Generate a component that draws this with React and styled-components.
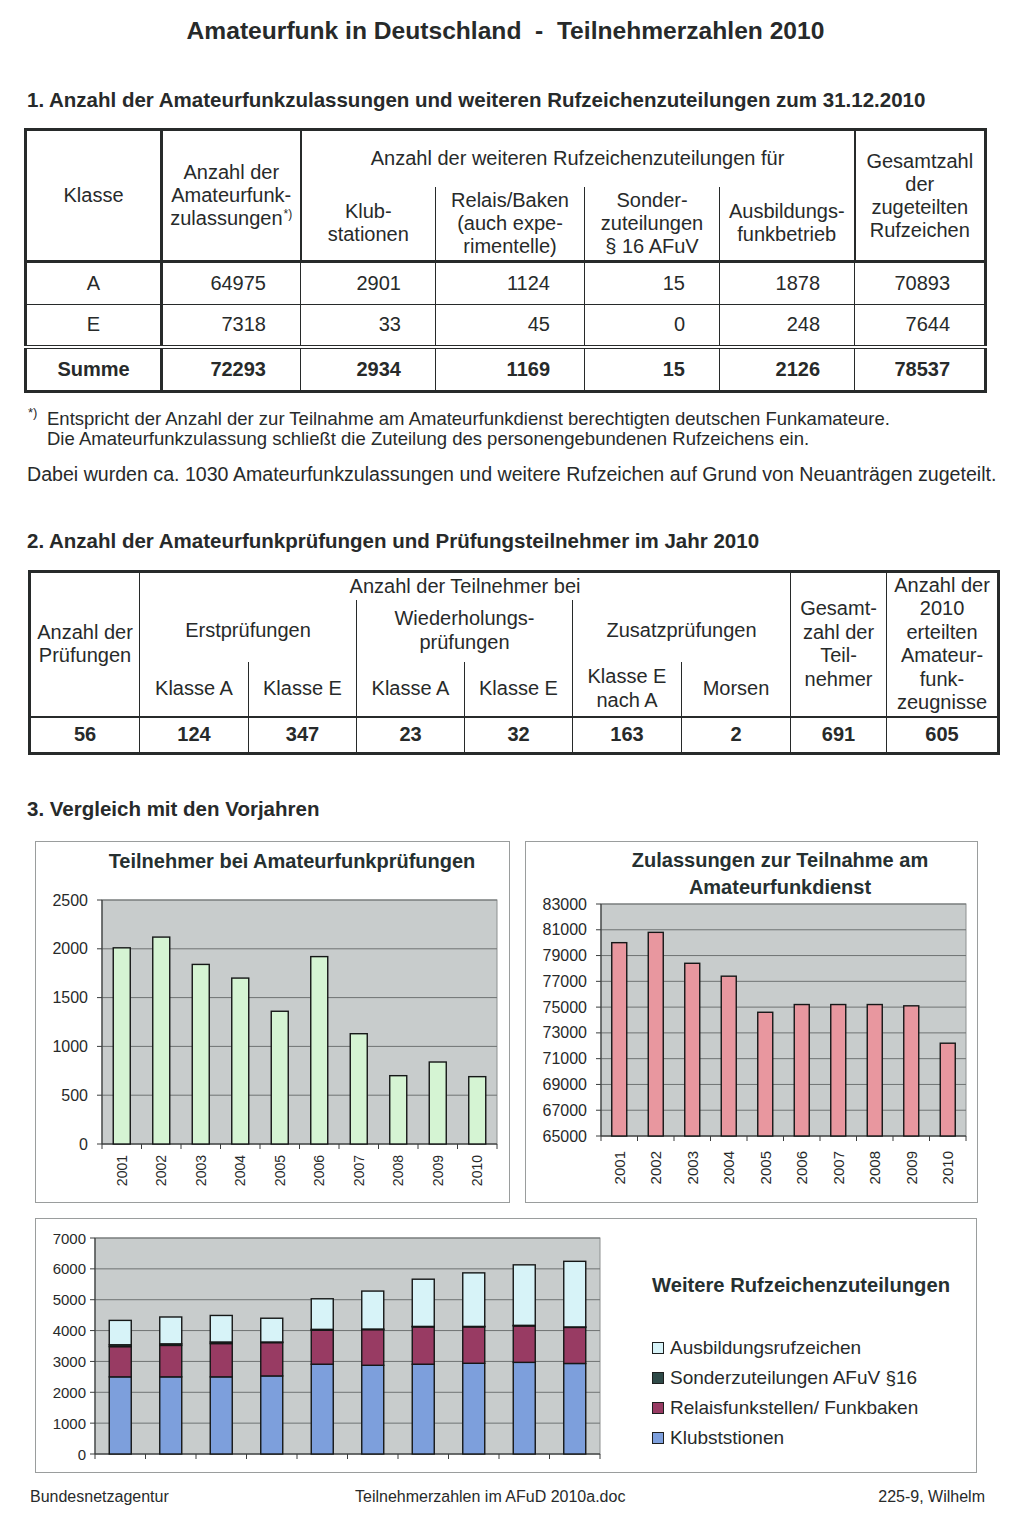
import React from 'react';
import styled, { createGlobalStyle } from 'styled-components';

const INK = '#272a2a';
const PLOT_BG = '#c8cccc';
const GRID = '#6f7373';

const GlobalStyle = createGlobalStyle`
  html, body { margin: 0; padding: 0; background: #fff; }
  body { font-family: "Liberation Sans", Arial, Helvetica, sans-serif; color: ${INK}; }
`;

const Page = styled.main`
  width: 1024px;
  height: 1516px;
  overflow: hidden;
  display: flex;
  flex-direction: column;
  align-items: flex-start;
`;

const DocTitle = styled.h1`
  align-self: stretch;
  margin: 17px 0 0;
  padding-right: 13px;
  font-size: 24.6px;
  line-height: 28px;
  font-weight: 700;
  text-align: center;
  white-space: pre;
`;

const SectionHeading = styled.h2`
  margin: ${p => p.$mt}px 0 0 27px;
  font-size: 20.5px;
  line-height: 24px;
  font-weight: 700;
`;

const DataTable = styled.table`
  margin: ${p => p.$mt}px 0 0 ${p => p.$ml}px;
  width: ${p => p.$w}px;
  border-collapse: collapse;
  table-layout: fixed;
  border: 3px solid ${INK};
  font-size: 20px;
  line-height: ${p => p.$lh}px;
`;

const Col = styled.col`
  width: ${p => p.$w}px;
`;

const Row = styled.tr`
  height: ${p => p.$h}px;
`;

const Cell = styled.td`
  border: 1px solid ${INK};
  padding: 0 ${p => p.$pr ?? 2}px 0 2px;
  text-align: ${p => p.$align || 'center'};
  vertical-align: middle;
  font-weight: ${p => (p.$bold ? 700 : 400)};
  white-space: nowrap;
  ${p => p.$br && `border-right: ${p.$br};`}
  ${p => p.$bl && `border-left: ${p.$bl};`}
  ${p => p.$bt && `border-top: ${p.$bt};`}
  ${p => (p.$open === 'bottom' || p.$open === 'both') && 'border-bottom: none;'}
  ${p => (p.$open === 'top' || p.$open === 'both') && 'border-top: none;'}
`;

const Sup = styled.sup`
  font-size: 12px;
  line-height: 0;
  vertical-align: 7px;
  margin-left: 1px;
`;

const Footnote = styled.div`
  display: flex;
  margin: 16px 0 0 28px;
  font-size: 18.5px;
  line-height: 20px;
`;

const FootMark = styled.span`
  width: 19px;
  flex: none;
  font-size: 13px;
  line-height: 13px;
  margin-top: -3px;
`;

const Note = styled.p`
  margin: 13px 0 0 27px;
  font-size: 19.6px;
  line-height: 24px;
`;

const ChartRow = styled.div`
  display: flex;
  gap: 15px;
  margin: 20px 0 0 35px;
`;

const ChartCard = styled.section`
  box-sizing: border-box;
  width: ${p => p.$w}px;
  height: ${p => p.$h}px;
  border: 1px solid #9a9d9d;
  display: flex;
  flex-direction: ${p => (p.$row ? 'row' : 'column')};
  margin: ${p => p.$mt || 0}px 0 0 ${p => p.$ml || 0}px;
`;

const ChartTitle = styled.h3`
  margin: 0;
  padding: ${p => p.$pt}px 0 0 ${p => p.$pl}px;
  font-size: 20px;
  line-height: ${p => p.$lh}px;
  font-weight: 700;
  text-align: center;
  color: #263030;
`;

const PlotSvg = styled.svg`
  display: block;
  flex: none;
  overflow: visible;
`;

const Legend = styled.div`
  display: flex;
  flex-direction: column;
  padding: 54px 0 0 16px;
`;

const LegendTitle = styled.h4`
  margin: 0 0 36px;
  font-size: 20.2px;
  line-height: 24px;
  font-weight: 700;
  color: #263030;
`;

const LegendItem = styled.div`
  display: flex;
  align-items: center;
  gap: 6px;
  font-size: 19px;
  line-height: 30px;
`;

const Swatch = styled.span`
  width: 10px;
  height: 10px;
  border: 1px solid #1d1f1f;
  background: ${p => p.$c};
`;

const Footer = styled.footer`
  align-self: stretch;
  display: grid;
  grid-template-columns: 325px 1fr auto;
  margin: 14px 39px 0 30px;
  font-size: 16px;
  line-height: 20px;
`;

function BarPlot({
  width, height, x0, x1, y0, y1, min, max, step, bars, barW,
  labelX, labelSize, years, yearY, yearSize,
}) {
  const n = bars.length;
  const cw = (x1 - x0) / n;
  const sy = v => y1 - ((v - min) / (max - min)) * (y1 - y0);
  const ticks = [];
  for (let v = min; v <= max; v += step) ticks.push(v);
  return (
    <PlotSvg width={width} height={height}>
      <rect x={x0} y={y0} width={x1 - x0} height={y1 - y0} fill={PLOT_BG} stroke="#8d9090" strokeWidth={1} />
      {ticks.map(v => (
        <line key={'g' + v} x1={x0} x2={x1} y1={sy(v)} y2={sy(v)} stroke={GRID} strokeWidth={1} />
      ))}
      {ticks.map(v => (
        <line key={'t' + v} x1={x0 - 5} x2={x0} y1={sy(v)} y2={sy(v)} stroke="#3a3d3d" strokeWidth={1} />
      ))}
      {ticks.map(v => (
        <text key={'l' + v} x={labelX} y={sy(v)} textAnchor="end" dominantBaseline="central" fontSize={labelSize} fill={INK}>
          {v}
        </text>
      ))}
      <line x1={x0} y1={y0} x2={x0} y2={y1} stroke="#3a3d3d" strokeWidth={1.2} />
      <line x1={x0} y1={y1} x2={x1} y2={y1} stroke="#3a3d3d" strokeWidth={1.2} />
      {Array.from({ length: n + 1 }, (_, i) => (
        <line key={'x' + i} x1={x0 + i * cw} x2={x0 + i * cw} y1={y1} y2={y1 + 5} stroke="#3a3d3d" strokeWidth={1} />
      ))}
      {bars.map((segs, i) => {
        const cx = x0 + (i + 0.5) * cw;
        let prev = min;
        return (
          <g key={'b' + i}>
            {segs.map(([top, color], j) => {
              const r = (
                <rect key={j} x={cx - barW / 2} y={sy(top)} width={barW} height={sy(prev) - sy(top)}
                  fill={color} stroke="#151717" strokeWidth={1.4} />
              );
              prev = top;
              return r;
            })}
          </g>
        );
      })}
      {years && years.map((y, i) => {
        const cx = x0 + (i + 0.5) * cw;
        return (
          <text key={'y' + y} x={cx} y={yearY} transform={`rotate(-90 ${cx} ${yearY})`} textAnchor="end"
            dominantBaseline="central" fontSize={yearSize} fill={INK}>
            {y}
          </text>
        );
      })}
    </PlotSvg>
  );
}

const YEARS = [2001, 2002, 2003, 2004, 2005, 2006, 2007, 2008, 2009, 2010];
const GREEN = '#d5f4d3';
const PINK = '#e8979f';
const C_KLUB = '#7d9fdc';
const C_REL = '#983b63';
const C_SON = '#2f4a48';
const C_AUS = '#d7f3f8';

const prufData = [2010, 2120, 1840, 1700, 1360, 1920, 1130, 700, 840, 690].map(v => [[v, GREEN]]);
const zulData = [80000, 80800, 78400, 77400, 74600, 75200, 75200, 75200, 75100, 72200].map(v => [[v, PINK]]);
const stackData = [
  [2500, 3480, 3540, 4330],
  [2500, 3520, 3570, 4440],
  [2500, 3580, 3630, 4490],
  [2530, 3610, 3630, 4400],
  [2910, 4010, 4040, 5030],
  [2875, 4030, 4050, 5280],
  [2910, 4120, 4135, 5665],
  [2940, 4120, 4135, 5870],
  [2970, 4150, 4170, 6130],
  [2934, 4103, 4118, 6244],
].map(([a, b, c, d]) => [[a, C_KLUB], [b, C_REL], [c, C_SON], [d, C_AUS]]);

const LEGEND = [
  ['Ausbildungsrufzeichen', C_AUS],
  ['Sonderzuteilungen AFuV §16', C_SON],
  ['Relaisfunkstellen/ Funkbaken', C_REL],
  ['Klubststionen', C_KLUB],
];

export default function App() {
  const NUM = 34;
  return (
    <>
      <GlobalStyle />
      <Page>
        <DocTitle>{'Amateurfunk in Deutschland  -  Teilnehmerzahlen 2010'}</DocTitle>

        <SectionHeading $mt={43}>
          1. Anzahl der Amateurfunkzulassungen und weiteren Rufzeichenzuteilungen zum 31.12.2010
        </SectionHeading>

        <DataTable $mt={16} $ml={24} $w={960} $lh={23}>
          <colgroup>
            <Col $w={136} /><Col $w={139} /><Col $w={135} /><Col $w={149} />
            <Col $w={135} /><Col $w={135} /><Col $w={131} />
          </colgroup>
          <tbody>
            <Row $h={57}>
              <Cell rowSpan={2} $br="3px solid #272a2a">Klasse</Cell>
              <Cell rowSpan={2} $br="2px solid #272a2a">
                Anzahl der<br />Amateurfunk-<br />zulassungen<Sup>*)</Sup>
              </Cell>
              <Cell colSpan={4} $open="bottom">Anzahl der weiteren Rufzeichenzuteilungen für</Cell>
              <Cell rowSpan={2} $bl="2px solid #272a2a">Gesamtzahl<br />der<br />zugeteilten<br />Rufzeichen</Cell>
            </Row>
            <Row $h={75}>
              <Cell $open="top">Klub-<br />stationen</Cell>
              <Cell $open="top">Relais/Baken<br />(auch expe-<br />rimentelle)</Cell>
              <Cell $open="top">Sonder-<br />zuteilungen<br />§ 16 AFuV</Cell>
              <Cell $open="top">Ausbildungs-<br />funkbetrieb</Cell>
            </Row>
            <Row $h={43}>
              <Cell $bt="3px solid #272a2a" $br="3px solid #272a2a">A</Cell>
              {[64975, 2901, 1124, 15, 1878, 70893].map((v, i) => (
                <Cell key={i} $bt="3px solid #272a2a" $align="right" $pr={NUM}>{v}</Cell>
              ))}
            </Row>
            <Row $h={42}>
              <Cell $br="3px solid #272a2a">E</Cell>
              {[7318, 33, 45, 0, 248, 7644].map((v, i) => (
                <Cell key={i} $align="right" $pr={NUM}>{v}</Cell>
              ))}
            </Row>
            <Row $h={45}>
              <Cell $bt="4px double #272a2a" $br="3px solid #272a2a" $bold>Summe</Cell>
              {[72293, 2934, 1169, 15, 2126, 78537].map((v, i) => (
                <Cell key={i} $bt="4px double #272a2a" $align="right" $pr={NUM} $bold>{v}</Cell>
              ))}
            </Row>
          </tbody>
        </DataTable>

        <Footnote>
          <FootMark>*)</FootMark>
          <div>
            Entspricht der Anzahl der zur Teilnahme am Amateurfunkdienst berechtigten deutschen Funkamateure.<br />
            Die Amateurfunkzulassung schließt die Zuteilung des personengebundenen Rufzeichens ein.
          </div>
        </Footnote>
        <Note>
          Dabei wurden ca. 1030 Amateurfunkzulassungen und weitere Rufzeichen auf Grund von Neuanträgen zugeteilt.
        </Note>

        <SectionHeading $mt={43}>
          2. Anzahl der Amateurfunkprüfungen und Prüfungsteilnehmer im Jahr 2010
        </SectionHeading>

        <DataTable $mt={17} $ml={28} $w={969} $lh={23.5}>
          <colgroup>
            <Col $w={110} /><Col $w={109} /><Col $w={108} /><Col $w={108} /><Col $w={108} />
            <Col $w={109} /><Col $w={109} /><Col $w={96} /><Col $w={112} />
          </colgroup>
          <tbody>
            <Row $h={28}>
              <Cell rowSpan={3}>Anzahl der<br />Prüfungen</Cell>
              <Cell colSpan={6} $open="bottom">Anzahl der Teilnehmer bei</Cell>
              <Cell rowSpan={3}>Gesamt-<br />zahl der<br />Teil-<br />nehmer</Cell>
              <Cell rowSpan={3}>Anzahl der<br />2010<br />erteilten<br />Amateur-<br />funk-<br />zeugnisse</Cell>
            </Row>
            <Row $h={62}>
              <Cell colSpan={2} $open="both">Erstprüfungen</Cell>
              <Cell colSpan={2} $open="both">Wiederholungs-<br />prüfungen</Cell>
              <Cell colSpan={2} $open="both">Zusatzprüfungen</Cell>
            </Row>
            <Row $h={55}>
              <Cell $open="top">Klasse A</Cell>
              <Cell $open="top">Klasse E</Cell>
              <Cell $open="top">Klasse A</Cell>
              <Cell $open="top">Klasse E</Cell>
              <Cell $open="top">Klasse E<br />nach A</Cell>
              <Cell $open="top">Morsen</Cell>
            </Row>
            <Row $h={37}>
              {[56, 124, 347, 23, 32, 163, 2, 691, 605].map((v, i) => (
                <Cell key={i} $bt="2px solid #272a2a" $bold>{v}</Cell>
              ))}
            </Row>
          </tbody>
        </DataTable>

        <SectionHeading $mt={42}>3. Vergleich mit den Vorjahren</SectionHeading>

        <ChartRow>
          <ChartCard $w={475} $h={362}>
            <ChartTitle $pt={7} $pl={39} $lh={24}>Teilnehmer bei Amateurfunkprüfungen</ChartTitle>
            <BarPlot width={473} height={328} x0={66} x1={461} y0={27} y1={271}
              min={0} max={2500} step={500} bars={prufData} barW={17}
              labelX={52} labelSize={16} years={YEARS} yearY={282} yearSize={14} />
          </ChartCard>
          <ChartCard $w={453} $h={362}>
            <ChartTitle $pt={5} $pl={57} $lh={27}>Zulassungen zur Teilnahme am<br />Amateurfunkdienst</ChartTitle>
            <BarPlot width={451} height={300} x0={75} x1={440} y0={3} y1={235}
              min={65000} max={83000} step={2000} bars={zulData} barW={15}
              labelX={61} labelSize={16} years={YEARS} yearY={250} yearSize={15} />
          </ChartCard>
        </ChartRow>

        <ChartCard $w={942} $h={255} $row $mt={15} $ml={35}>
          <BarPlot width={600} height={253} x0={59} x1={564} y0={19} y1={235}
            min={0} max={7000} step={1000} bars={stackData} barW={22}
            labelX={50} labelSize={15} />
          <Legend>
            <LegendTitle>Weitere Rufzeichenzuteilungen</LegendTitle>
            {LEGEND.map(([label, c]) => (
              <LegendItem key={label}>
                <Swatch $c={c} />
                {label}
              </LegendItem>
            ))}
          </Legend>
        </ChartCard>

        <Footer>
          <span>Bundesnetzagentur</span>
          <span>Teilnehmerzahlen im AFuD 2010a.doc</span>
          <span>225-9, Wilhelm</span>
        </Footer>
      </Page>
    </>
  );
}
